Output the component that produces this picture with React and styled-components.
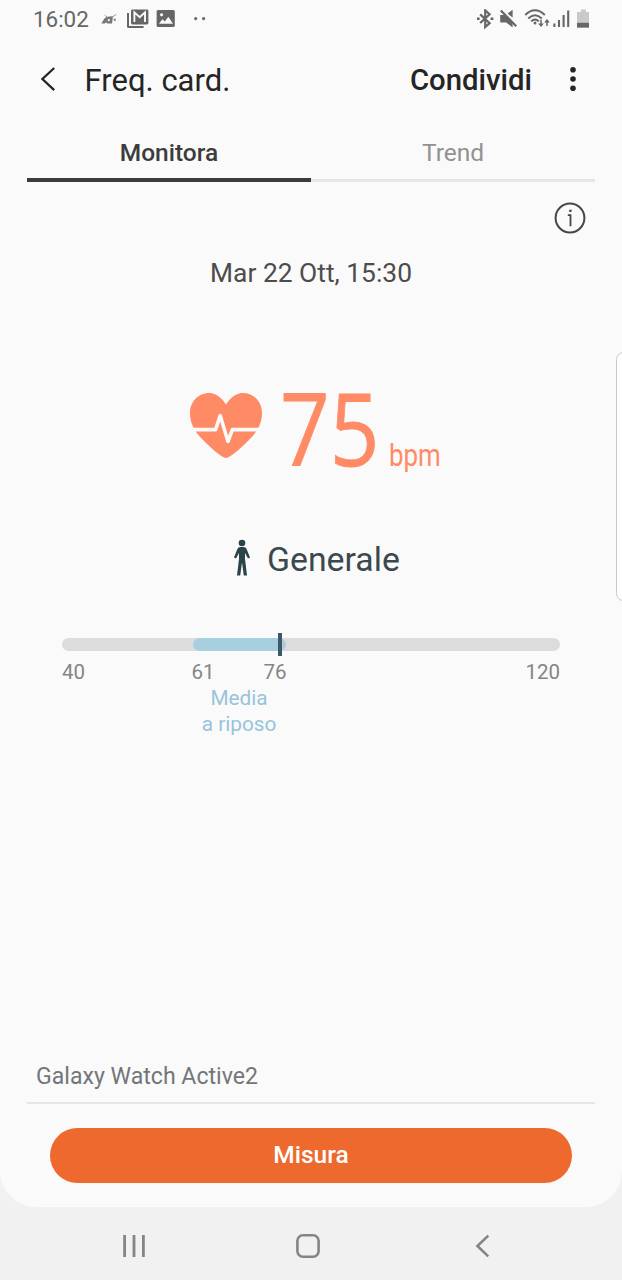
import React from 'react';
import styled, { createGlobalStyle } from 'styled-components';

const RANGE = { min: 40, max: 120 };

function App() {
  return (
    <>
      <GlobalStyle />
      <Screen>
        <Panel>
          <StatusBar>
            <Clock>16:02</Clock>
            <NotificationIcons />
            <SystemIcons />
          </StatusBar>

          <Header>
            <BackButton aria-label="Indietro">
              <svg width="18" height="28" viewBox="0 0 18 28">
                <path d="M15.2 2 L3.4 13 L15.2 24.2" fill="none" stroke="#252525" strokeWidth="2.3" />
              </svg>
            </BackButton>
            <Title>Freq. card.</Title>
            <ShareButton>Condividi</ShareButton>
            <MenuButton aria-label="Altro">
              <svg width="8" height="26" viewBox="0 0 8 26">
                <circle cx="4" cy="2.8" r="2.8" fill="#252525" />
                <circle cx="4" cy="12" r="2.8" fill="#252525" />
                <circle cx="4" cy="21.2" r="2.8" fill="#252525" />
              </svg>
            </MenuButton>
          </Header>

          <Tabs>
            <Tab $active>Monitora</Tab>
            <Tab>Trend</Tab>
          </Tabs>

          <InfoRow>
            <svg width="32" height="32" viewBox="0 0 32 32" fill="none" stroke="#454545">
              <circle cx="16" cy="16" r="14.4" strokeWidth="2" />
              <path d="M13.8 13.2 H16.5 V24.2" strokeWidth="1.8" />
              <path d="M15.2 8.8 H17.6" strokeWidth="2.2" />
            </svg>
          </InfoRow>

          <DateText>Mar 22 Ott, 15:30</DateText>

          <Reading>
            <HeartIcon />
            <Bpm>75</Bpm>
            <Unit>bpm</Unit>
          </Reading>

          <Status>
            <PersonIcon />
            <StatusText>Generale</StatusText>
          </Status>

          <Range>
            <Track>
              <Average />
              <Marker />
            </Track>
            <Scale>
              <ScaleValue>{RANGE.min}</ScaleValue>
              <AverageBox>
                <AverageValues>
                  <ScaleValue>61</ScaleValue>
                  <ScaleValue>76</ScaleValue>
                </AverageValues>
                <AverageLabel>
                  Media
                  <br />a riposo
                </AverageLabel>
              </AverageBox>
              <ScaleValue>{RANGE.max}</ScaleValue>
            </Scale>
          </Range>

          <Device>Galaxy Watch Active2</Device>
          <MeasureButton>Misura</MeasureButton>
          <EdgeHandle />
        </Panel>

        <NavigationBar>
          <svg width="24" height="24" viewBox="0 0 24 24" stroke="#858585" strokeWidth="2.8">
            <path d="M2.6 1 V23 M12 1 V23 M21.4 1 V23" />
          </svg>
          <svg width="24" height="24" viewBox="0 0 24 24" fill="none" stroke="#858585">
            <rect x="1.4" y="1.3" width="21.2" height="21.4" rx="5.6" strokeWidth="2.6" />
          </svg>
          <svg width="24" height="24" viewBox="0 0 24 24" fill="none" stroke="#858585">
            <path d="M18.3 1.6 L7.4 12 L18.3 22.4" strokeWidth="2.6" />
          </svg>
        </NavigationBar>
      </Screen>
    </>
  );
}

export default App;

function NotificationIcons() {
  return (
    <svg width="110" height="24" viewBox="0 0 110 24" fill="#666">
      {/* bird */}
      <path d="M3.4 17.4 L6.4 12.6 Q8.4 10.2 11.4 10.4 L15 10.2 L14 17.4 H9.2 Q8.4 15.6 6.6 17.4 Z" fill="#777" />
      <circle cx="10.8" cy="14.2" r="1.1" fill="#fafafa" />
      <path d="M6.6 9.2 L9.4 11.4 M14.4 11 L18.2 8.4" stroke="#999" strokeWidth="1" />
      <circle cx="16.8" cy="13.8" r="1.2" fill="#888" />
      {/* mail */}
      <path d="M30 7 V20.4 Q30 21 30.6 21 H45.6" fill="none" stroke="#666" strokeWidth="2" />
      <rect x="33" y="3.6" width="17.4" height="14.8" rx="1.4" />
      <path d="M36.4 16 V6.4 L41.7 11.2 L47 6.4 V16" fill="none" stroke="#fafafa" strokeWidth="1.9" />
      {/* picture */}
      <path
        fillRule="evenodd"
        d="M60.2 4 H75.2 Q76.8 4 76.8 5.6 V19.4 Q76.8 21 75.2 21 H60.2 Q58.6 21 58.6 19.4 V5.6 Q58.6 4 60.2 4 Z M61 17.8 H75 L70.4 10.8 L66.8 15.6 L64.4 13.2 Z M63.6 7.2 A1.6 1.6 0 1 0 63.61 7.2 Z"
      />
      <circle cx="97.7" cy="12.6" r="1.6" />
      <circle cx="105.6" cy="12.6" r="1.6" />
    </svg>
  );
}

function SystemIcons() {
  return (
    <SystemIconsSvg width="114" height="22" viewBox="0 0 114 22" fill="none" stroke="#666">
      {/* bluetooth */}
      <path d="M4.2 5.4 L13.6 14.2 L9.2 18 V1.4 L13.6 5.3 L4.2 14" strokeWidth="2.2" />
      <path d="M1 9.8 H3.6 M14.6 9.8 H17.4" strokeWidth="2.4" />
      {/* muted speaker */}
      <path d="M24.2 6 H29 L36.6 13.2 V18.6 L30.2 13.4 H24.2 Z" fill="#666" stroke="none" />
      <path d="M36.6 0.8 V8.6 L31.6 4.6 Z" fill="#666" stroke="none" />
      <path d="M24.8 1.4 L40.2 17.2" strokeWidth="2.2" />
      {/* wifi */}
      <path d="M49.2 6 Q59 -3.4 68.8 6 M52.2 9.4 Q59 3 65.8 9.4 M55.2 12.4 Q59 8.6 62.8 12.4" strokeWidth="2" />
      <circle cx="59" cy="14" r="1.5" fill="#666" stroke="none" />
      <path d="M65 10.8 V16 M71 11.4 V17" strokeWidth="1.5" />
      <path d="M62.2 14.4 H67.8 L65 18 Z M68.2 13.4 H73.8 L71 10 Z" fill="#666" stroke="none" />
      {/* signal */}
      <path d="M78.4 14.6 V18 M83 11 V18 M87.6 6 V18 M92.2 1.4 V18" strokeWidth="2.1" />
      {/* battery */}
      <path d="M105 0.6 H109.8 V3 H113 V18.6 H101 V3 H105 Z" fill="#cacaca" stroke="none" />
      <path d="M101 13.8 H113 V18.6 H101 Z" fill="#666" stroke="none" />
    </SystemIconsSvg>
  );
}

function HeartIcon() {
  return (
    <svg width="74" height="68" viewBox="0 0 74 68">
      <path
        d="M37 12.5 C43 3 49.5 1 54 1 C65 1 73 10 73 21 C73 32 68 40 60 48 C52 55.5 42 65.6 37 66 C32 65.6 22 55.5 14 48 C6 40 1 32 1 21 C1 10 9 1 20 1 C24.5 1 31 3 37 12.5 Z"
        fill="#ff8b66"
      />
      <path d="M2 37.6 H26.6 L31.2 23.6 L39 49.4 L43.4 37.6 H72" fill="none" stroke="#fafafa" strokeWidth="3.6" strokeLinejoin="round" />
    </svg>
  );
}

function PersonIcon() {
  return (
    <svg width="18" height="38" viewBox="0 0 18 38" fill="#2b4249">
      <circle cx="9" cy="4" r="3.3" />
      <path d="M7.4 8 H10.6 Q12.8 8 13.6 10 L17 18.4 L15 19.6 L12 14 V20 L14 36.6 H10.8 L9 23.6 L7.2 36.6 H4 L6 20 V14 L3 19.6 L1 18.4 L4.4 10 Q5.2 8 7.4 8 Z" />
    </svg>
  );
}

const GlobalStyle = createGlobalStyle`
  * {
    box-sizing: border-box;
  }

  body {
    margin: 0;
    background: #f1f1f1;
    font-family: Roboto, sans-serif;
  }

  button {
    padding: 0;
    border: 0;
    background: none;
    font-family: inherit;
  }

  svg {
    display: block;
    flex-shrink: 0;
  }
`;

const Screen = styled.div`
  width: 622px;
  height: 1280px;
  overflow: hidden;
  background: #f1f1f1;
`;

const Panel = styled.main`
  position: relative;
  display: flex;
  flex-direction: column;
  height: 1207px;
  overflow: hidden;
  border-radius: 0 0 36px 36px;
  background: #fafafa;
`;

const StatusBar = styled.div`
  display: flex;
  align-items: flex-start;
  height: 40px;
  padding: 6px 33px 0;
`;

const Clock = styled.span`
  width: 65px;
  color: #666;
  font-size: 22.4px;
  line-height: 27px;
`;

const SystemIconsSvg = styled.svg`
  margin: 3px -1px 0 auto;
`;

const Header = styled.header`
  display: flex;
  align-items: center;
  height: 80px;
  padding: 0 45px 0 39px;
`;

const BackButton = styled.button`
  width: 45.5px;
`;

const Title = styled.h1`
  margin: 0;
  color: #252525;
  font-size: 31px;
  font-weight: 400;
`;

const ShareButton = styled.button`
  margin-left: auto;
  color: #252525;
  font-size: 29.3px;
  font-weight: 500;
`;

const MenuButton = styled.button`
  margin-left: 37px;
`;

const Tabs = styled.nav`
  display: flex;
  height: 62px;
  margin: 0 27px;
`;

const Tab = styled.div`
  position: relative;
  flex: 1;
  padding-top: 18px;
  color: ${({ $active }) => ($active ? '#3c3c3c' : '#919191')};
  font-size: 24.5px;
  font-weight: ${({ $active }) => ($active ? 500 : 400)};
  line-height: 29px;
  text-align: center;

  &::after {
    content: '';
    position: absolute;
    right: 0;
    bottom: 0;
    left: 0;
    height: ${({ $active }) => ($active ? 4 : 3)}px;
    background: ${({ $active }) => ($active ? '#3c3c3c' : '#e6e6e6')};
  }
`;

const InfoRow = styled.div`
  display: flex;
  justify-content: flex-end;
  padding: 20px 36px 0 0;
`;

const DateText = styled.div`
  margin-top: 23px;
  color: #4c4c4c;
  font-size: 26.4px;
  line-height: 32px;
  text-align: center;
`;

const Reading = styled.div`
  display: flex;
  height: 78px;
  margin: 103px 0 0 189px;
  color: #ff8b66;
`;

const Bpm = styled.span`
  width: 97px;
  margin: -4px 0 0 17px;
  font-family: 'Open Sans', sans-serif;
  font-size: 101px;
  font-weight: 500;
  line-height: 78px;
  transform: scaleX(0.86);
  transform-origin: left;
  -webkit-text-stroke: 0.8px #ff8b66;
`;

const Unit = styled.span`
  width: 52px;
  margin: 46px 0 0 12px;
  font-size: 30.5px;
  line-height: 36px;
  transform: scaleX(0.85);
  transform-origin: left;
`;

const Status = styled.div`
  display: flex;
  align-items: center;
  height: 44px;
  margin: 66px 0 0 233px;
`;

const StatusText = styled.span`
  margin: 4px 0 0 16px;
  color: #3b494f;
  font-size: 33.8px;
  line-height: 40px;
`;

const Range = styled.section`
  margin: 58px 62px 0;
`;

const Track = styled.div`
  position: relative;
  height: 13px;
  border-radius: 7px;
  background: #dcdcdc;
`;

const Average = styled.div`
  width: 93px;
  height: 13px;
  margin-left: 131px;
  border-radius: 7px;
  background: #a8cfe0;
`;

const Marker = styled.div`
  position: absolute;
  top: -5px;
  left: 216px;
  width: 4px;
  height: 23px;
  background: #3d5966;
`;

const Scale = styled.div`
  display: flex;
  margin-top: 8px;
`;

const ScaleValue = styled.span`
  color: #858585;
  font-size: 20.5px;
  line-height: 26px;

  &:last-child {
    margin-left: auto;
  }
`;

const AverageBox = styled.div`
  width: 95px;
  margin-left: 106.5px;
`;

const AverageValues = styled.div`
  display: flex;
`;

const AverageLabel = styled.div`
  color: #98c4db;
  font-size: 20.8px;
  line-height: 26px;
  text-align: center;
`;

const Device = styled.div`
  height: 41px;
  margin: auto 27px 0;
  padding-left: 9px;
  border-bottom: 2px solid #e6e6e6;
  color: #737678;
  font-size: 23.1px;
  line-height: 28px;
`;

const MeasureButton = styled.button`
  flex-shrink: 0;
  height: 55px;
  margin: 24px 50px;
  padding-bottom: 2px;
  border-radius: 28px;
  background: #ed692e;
  color: #fff;
  font-size: 24.5px;
  font-weight: 500;
`;

const EdgeHandle = styled.div`
  position: absolute;
  top: 352px;
  right: -9px;
  width: 15px;
  height: 249px;
  border: 1px solid #c8c8c8;
  border-radius: 8px;
  background: #fff;
`;

const NavigationBar = styled.footer`
  display: flex;
  align-items: center;
  justify-content: space-between;
  height: 78px;
  padding: 0 128px 0 122px;
`;
